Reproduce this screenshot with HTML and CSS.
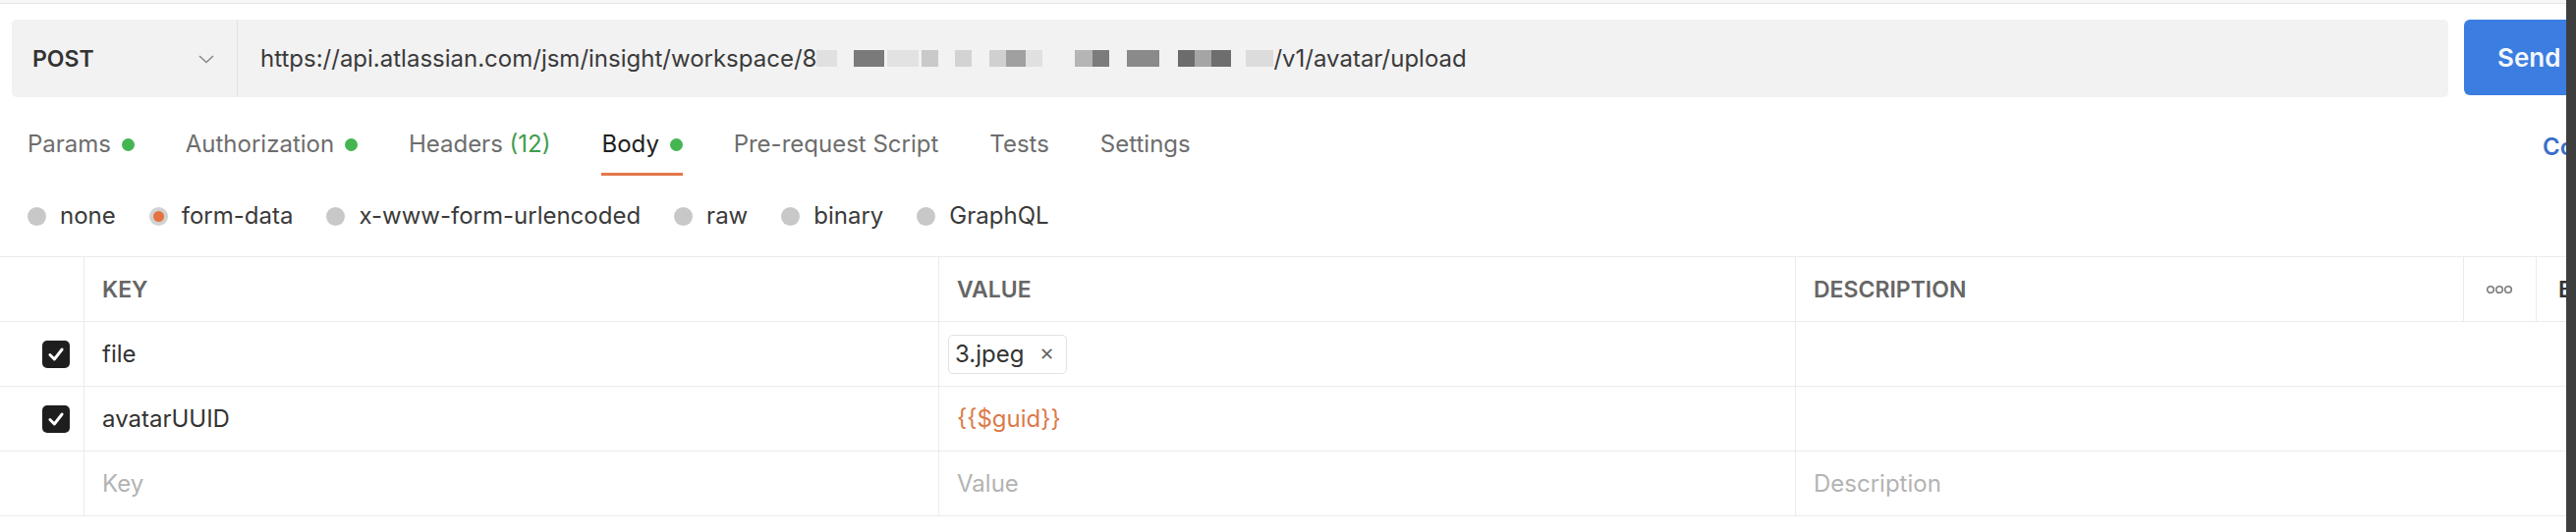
FILE: index.html
```html
<!DOCTYPE html>
<html lang="en">
<head>
    <meta charset="UTF-8">
    <meta name="viewport" content="width=device-width, initial-scale=1.0">
    <title>POST avatar upload</title>
    <link rel="stylesheet" href="styles.css">
</head>
<body>

<div class="window">
    <main class="panel">
        <div class="topline"></div>

        <div class="request-bar">
            <div class="url-box">
                <div class="method">
                    <span>POST</span>
                    <svg class="chevron" width="18" height="12" viewBox="0 0 18 12">
                        <path d="M2 3 L9 9.5 L16 3" fill="none" stroke="#8a8a8a" stroke-width="1.6"/>
                    </svg>
                </div>
                <div class="url">
                    <span>https://api.atlassian.com/jsm/insight/workspace/8</span><span class="redacted"></span><span>/v1/avatar/upload</span>
                </div>
            </div>
            <button class="send">Send</button>
        </div>

        <div class="tabs-row">
            <nav class="tabs">
                <span class="tab">Params <i class="dot"></i></span>
                <span class="tab">Authorization <i class="dot"></i></span>
                <span class="tab">Headers <em class="count">(12)</em></span>
                <span class="tab active">Body <i class="dot"></i></span>
                <span class="tab">Pre-request Script</span>
                <span class="tab">Tests</span>
                <span class="tab">Settings</span>
            </nav>
            <span class="cookies">Cookies</span>
        </div>

        <div class="body-types">
            <label class="radio"><i class="circle"></i>none</label>
            <label class="radio"><i class="circle checked"></i>form-data</label>
            <label class="radio"><i class="circle"></i>x-www-form-urlencoded</label>
            <label class="radio"><i class="circle"></i>raw</label>
            <label class="radio"><i class="circle"></i>binary</label>
            <label class="radio"><i class="circle"></i>GraphQL</label>
        </div>

        <div class="kv-table">
            <div class="kv-row head">
                <div class="cell check"></div>
                <div class="cell">KEY</div>
                <div class="cell">VALUE</div>
                <div class="cell">DESCRIPTION</div>
                <div class="cell more">
                    <svg width="28" height="10" viewBox="0 0 28 10">
                        <circle cx="5" cy="5" r="3.3" fill="none" stroke="#7a7a7a" stroke-width="1.6"/>
                        <circle cx="14" cy="5" r="3.3" fill="none" stroke="#7a7a7a" stroke-width="1.6"/>
                        <circle cx="23" cy="5" r="3.3" fill="none" stroke="#7a7a7a" stroke-width="1.6"/>
                    </svg>
                </div>
                <div class="cell bulk">Bulk Edit</div>
            </div>
            <div class="kv-row">
                <div class="cell check"><span class="checkbox"><svg width="20" height="20" viewBox="0 0 18 18"><path d="M3.5 9.5 L7.5 13.5 L14.5 4.5" fill="none" stroke="#fff" stroke-width="2.6" stroke-linecap="round" stroke-linejoin="round"/></svg></span></div>
                <div class="cell">file</div>
                <div class="cell"><span class="file-chip">3.jpeg <span class="remove">&#x2715;</span></span></div>
                <div class="cell desc"></div>
            </div>
            <div class="kv-row">
                <div class="cell check"><span class="checkbox"><svg width="20" height="20" viewBox="0 0 18 18"><path d="M3.5 9.5 L7.5 13.5 L14.5 4.5" fill="none" stroke="#fff" stroke-width="2.6" stroke-linecap="round" stroke-linejoin="round"/></svg></span></div>
                <div class="cell">avatarUUID</div>
                <div class="cell variable">{{$guid}}</div>
                <div class="cell desc"></div>
            </div>
            <div class="kv-row">
                <div class="cell check"></div>
                <div class="cell placeholder">Key</div>
                <div class="cell placeholder">Value</div>
                <div class="cell desc placeholder">Description</div>
            </div>
        </div>
    </main>
    <div class="edge"></div>
</div>

</body>
</html>
```

FILE: styles.css
```css
body {
    margin: 0;
    font-family: 'Inter', 'Liberation Sans', sans-serif;
    color: #333;
    background-color: #fff;
}

.window {
    display: flex;
    height: 542px;
}

.panel {
    width: 2612px;
    flex-shrink: 0;
    overflow: hidden;
    background-color: #fff;
}

.edge {
    width: 10px;
    background-color: #3e3e3e;
}

.topline {
    height: 3px;
    border-bottom: 1px solid #e6e6e6;
    background-color: #f6f6f6;
}

/* request bar */
.request-bar {
    display: flex;
    gap: 16px;
    margin-top: 16px;
    padding-left: 12px;
}

.url-box {
    display: flex;
    align-items: center;
    width: 2480px;
    height: 79px;
    flex-shrink: 0;
    background-color: #f2f2f2;
    border-radius: 5px;
}

.method {
    display: flex;
    align-items: center;
    justify-content: space-between;
    box-sizing: border-box;
    width: 230px;
    height: 100%;
    padding: 0 22px 0 21px;
    border-right: 1px solid #e2e2e2;
    font-size: 23px;
    font-weight: 600;
    color: #333;
}

.url {
    display: flex;
    align-items: center;
    padding-left: 23px;
    font-size: 24px;
    color: #3a3a3a;
    white-space: nowrap;
}

.redacted {
    display: inline-block;
    width: 465px;
    height: 17px;
    background: linear-gradient(to right,
        #e0e0e0 0, #e0e0e0 21px, transparent 21px, transparent 38px,
        #7a7a7a 38px, #7a7a7a 69px, transparent 69px, transparent 72px,
        #e2e2e2 72px, #e2e2e2 104px, transparent 104px, transparent 107px,
        #c9c9c9 107px, #c9c9c9 124px, transparent 124px, transparent 141px,
        #d3d3d3 141px, #d3d3d3 158px, transparent 158px, transparent 176px,
        #d0d0d0 176px, #d0d0d0 193px, #a0a0a0 193px, #a0a0a0 213px,
        #e0e0e0 213px, #e0e0e0 230px, transparent 230px, transparent 263px,
        #b5b5b5 263px, #b5b5b5 281px, #7c7c7c 281px, #7c7c7c 298px,
        transparent 298px, transparent 316px, #8a8a8a 316px, #8a8a8a 349px,
        transparent 349px, transparent 368px, #6c6c6c 368px, #6c6c6c 385px,
        #a5a5a5 385px, #a5a5a5 402px, #6e6e6e 402px, #6e6e6e 422px,
        transparent 422px, transparent 437px, #dcdcdc 437px, #dcdcdc 465px);
}

.send {
    width: 140px;
    height: 77px;
    flex-shrink: 0;
    padding: 0 0 0 34px;
    text-align: left;
    border: none;
    border-radius: 6px;
    background-color: #3b7de0;
    color: #f4f7fc;
    font-family: inherit;
    font-size: 26px;
    font-weight: 600;
}

/* tabs */
.tabs-row {
    display: flex;
    align-items: center;
    box-sizing: border-box;
    width: 2700px;
    margin-top: 20px;
    padding-left: 28px;
}

.tabs {
    display: flex;
    gap: 52px;
}

.tab {
    display: flex;
    align-items: center;
    padding: 14px 0 15px;
    line-height: 28px;
    border-bottom: 3px solid transparent;
    font-size: 24px;
    color: #6d6d6d;
    white-space: pre;
}

.tab.active {
    color: #212121;
    border-bottom-color: #e5774a;
}

.dot {
    display: inline-block;
    width: 13px;
    height: 13px;
    margin-left: 4px;
    border-radius: 50%;
    background-color: #45b552;
}

.count {
    font-style: normal;
    color: #3f9d4d;
}

.cookies {
    width: 112px;
    margin-left: auto;
    font-size: 24px;
    font-weight: 600;
    color: #3a6fc7;
    white-space: nowrap;
}

/* body types */
.body-types {
    display: flex;
    gap: 34px;
    margin-top: 27px;
    padding-left: 28px;
    line-height: 28px;
    font-size: 24px;
    color: #3a3a3a;
}

.radio {
    display: flex;
    align-items: center;
    gap: 14px;
}

.circle {
    box-sizing: border-box;
    width: 19px;
    height: 19px;
    border-radius: 50%;
    background-color: #c8c8c8;
}

.circle.checked {
    border: 4px solid #d2d2d2;
    background-color: #e5733f;
}

/* key value table */
.kv-table {
    margin-top: 27px;
    border-top: 1px solid #ebebeb;
}

.kv-row {
    display: grid;
    grid-template-columns: 85px 870px 872px 680px 74px 100px;
    height: 66px;
    box-sizing: border-box;
    border-bottom: 1px solid #ebebeb;
    font-size: 24px;
    color: #333;
}

.cell {
    display: flex;
    align-items: center;
    padding-left: 18px;
    border-left: 1px solid #ebebeb;
    white-space: nowrap;
}

.cell.check {
    border-left: none;
    padding-left: 43px;
}

.cell.desc {
    grid-column: 4 / -1;
}

.head .cell {
    font-size: 23px;
    font-weight: 600;
    color: #666;
}

.head .cell.more {
    padding-left: 22px;
}

.head .cell.bulk {
    padding-left: 22px;
    color: #333;
}

.checkbox {
    display: flex;
    align-items: center;
    justify-content: center;
    width: 28px;
    height: 28px;
    border-radius: 5px;
    background-color: #1e1e1e;
}

.file-chip {
    display: flex;
    align-items: center;
    gap: 16px;
    height: 38px;
    margin-left: -9px;
    padding: 0 12px 0 6px;
    border: 1px solid #e2e2e2;
    border-radius: 5px;
    color: #333;
}

.remove {
    font-size: 18px;
    color: #666;
}

.variable {
    color: #dc7a4b;
}

.placeholder {
    color: #b3b3b3;
}
```
